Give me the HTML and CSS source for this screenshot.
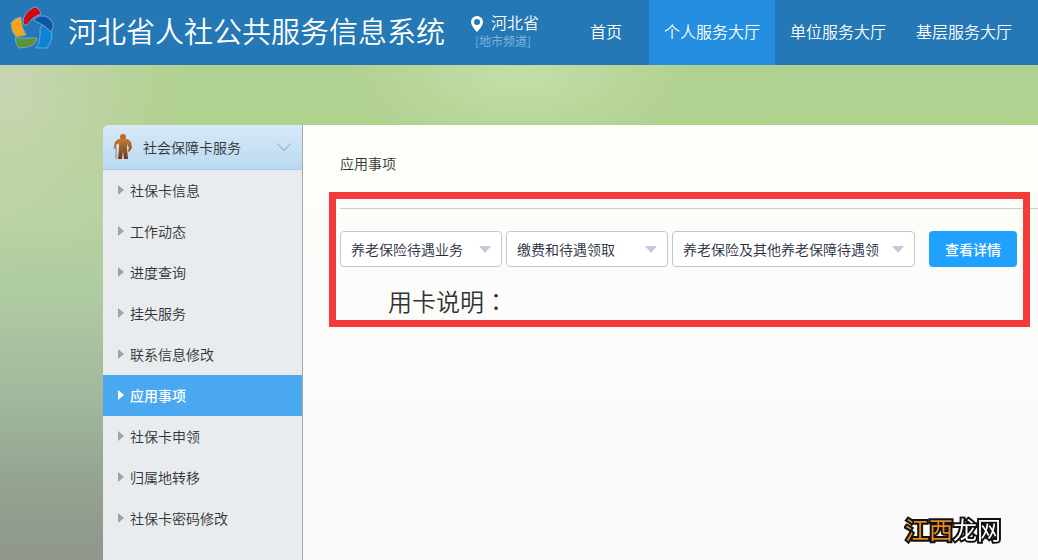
FILE: index.html
```html
<!DOCTYPE html>
<html lang="zh-CN">
<head>
<meta charset="utf-8">
<meta name="viewport" content="width=device-width, initial-scale=1">
<title>河北省人社公共服务信息系统</title>
<link rel="stylesheet" href="styles.css">
</head>
<body>
<header class="topbar">
  <svg class="logo" viewBox="0 4 46 48" aria-hidden="true">
    <g stroke="#6ea6d6" stroke-width="1" stroke-linejoin="round">
      <path fill="#0b84d6" d="M34 25 Q40 28 43 33 Q43 42 38 48 L27 48 Q32 42 31 28 Z"/>
      <path fill="#0c56a6" d="M24 20 L30 16 Q37 15 40 18 L44 23 Q45 28 42 32 Q36 25 24 20 Z"/>
      <path fill="#d2080f" d="M14 22 Q14 13 25 7 Q30 7 32 14 Q23 17 18 25 L15 25 Z"/>
      <path fill="#5a9434" d="M6 38 L28 38 Q27 48 10 48 Q7 46 6 38 Z"/>
      <path fill="#f7a416" d="M2 23 Q5 18 12 17 Q12 27 17 35 L7 37 Q2 31 2 23 Z"/>
    </g>
  </svg>
  <h1 class="site-title">河北省人社公共服务信息系统</h1>
  <div class="region">
    <div class="region-name">
      <svg class="pin" viewBox="0 0 12 16" aria-hidden="true">
        <path fill="#fff" fill-rule="evenodd" d="M6 0a6 6 0 0 0-6 6c0 4 6 10 6 10s6-6 6-10a6 6 0 0 0-6-6zm0 3a3 3 0 1 1 0 6 3 3 0 0 1 0-6z"/>
      </svg>
      <span>河北省</span>
    </div>
    <a class="region-link" href="#">[地市频道]</a>
  </div>
  <nav class="nav">
    <a class="nav-item nav-home" href="#">首页</a>
    <a class="nav-item active" href="#">个人服务大厅</a>
    <a class="nav-item" href="#">单位服务大厅</a>
    <a class="nav-item" href="#">基层服务大厅</a>
  </nav>
</header>

<div class="page">
  <aside class="sidebar">
    <button class="side-head" type="button">
      <svg class="person" viewBox="0 0 20 26" aria-hidden="true">
        <defs>
          <linearGradient id="coat" x1="0" y1="0" x2="0" y2="1">
            <stop offset="0" stop-color="#c87932"/>
            <stop offset="1" stop-color="#70371b"/>
          </linearGradient>
        </defs>
        <circle cx="10" cy="3" r="3" fill="#b9692b"/>
        <path fill="url(#coat)" d="M5 5h10l3 3 1 6-3 4-1-1 1-3-2-4v4l1 11h-4l-1-8-1 8H5l1-11v-5l-3 2v3l-2-1 1-5z"/>
        <path d="M0 14h4M3 14v11" stroke="#9a7f70" stroke-width="1" fill="none"/>
      </svg>
      <span class="side-title">社会保障卡服务</span>
      <svg class="chevron" viewBox="0 0 14 8" aria-hidden="true">
        <path d="M0 0.5L7 7.5L14 0.5" fill="none" stroke="#7d96ac" stroke-width="1"/>
      </svg>
    </button>
    <ul class="menu">
      <li><a class="menu-item" href="#">社保卡信息</a></li>
      <li><a class="menu-item" href="#">工作动态</a></li>
      <li><a class="menu-item" href="#">进度查询</a></li>
      <li><a class="menu-item" href="#">挂失服务</a></li>
      <li><a class="menu-item" href="#">联系信息修改</a></li>
      <li><a class="menu-item current" href="#">应用事项</a></li>
      <li><a class="menu-item" href="#">社保卡申领</a></li>
      <li><a class="menu-item" href="#">归属地转移</a></li>
      <li><a class="menu-item" href="#">社保卡密码修改</a></li>
    </ul>
  </aside>

  <main class="content">
    <h2 class="content-title">应用事项</h2>
    <section class="query">
      <form class="filters">
        <div class="picker">
          <select aria-label="业务类别"><option>养老保险待遇业务</option></select>
        </div>
        <div class="picker">
          <select aria-label="业务事项"><option>缴费和待遇领取</option></select>
        </div>
        <div class="picker picker-wide">
          <select aria-label="具体事项"><option>养老保险及其他养老保障待遇领</option></select>
        </div>
        <button class="detail-btn" type="button">查看详情</button>
      </form>
      <h3 class="note">用卡说明<span class="colon" lang="zh-TW">：</span></h3>
      <div class="highlight"></div>
    </section>
  </main>
</div>

<div class="watermark"><span class="watermark-accent">江西</span>龙网</div>
</body>
</html>
```

FILE: styles.css
```css
* {
  box-sizing: border-box;
}

body {
  margin: 0;
  min-height: 100vh;
  display: flex;
  flex-direction: column;
  font-family: "Noto Sans CJK SC", sans-serif;
  font-size: 14px;
  font-weight: 350;
  color: #333;
  background:
    radial-gradient(ellipse 170px 80px at 520px 75px, #c4dea9, transparent),
    radial-gradient(ellipse 180px 180px at 0 90px, #c9d5b4, transparent),
    linear-gradient(to bottom, #b1d193 0, #b1d18f 130px, #b5d2a0 220px, #aecaa2 300px, #a0b89c 400px, #939f8f 500px, #8f978c 560px);
}

a {
  color: inherit;
  text-decoration: none;
}

h1,
h2,
h3 {
  margin: 0;
  font-weight: 350;
}

.topbar {
  display: flex;
  height: 65px;
  align-items: center;
  padding-left: 9px;
  background: #2478b5;
  color: #fff;
  white-space: nowrap;
}

.logo {
  flex: none;
  width: 46px;
  height: 48px;
  margin-bottom: 9px;
}

.site-title {
  margin: 0 0 6px 13px;
  font-size: 29px;
  line-height: 40px;
}

.region {
  display: flex;
  flex-direction: column;
  margin: 0 0 3px 26px;
}

.region-name {
  display: flex;
  gap: 8px;
  font-size: 16px;
  line-height: 20px;
}

.pin {
  width: 12px;
  height: 16px;
  margin-top: 4px;
}

.region-link {
  padding-left: 4px;
  font-size: 12px;
  line-height: 18px;
  color: #84b8e2;
}

.nav {
  display: flex;
  align-self: stretch;
  margin-left: 36px;
}

.nav-item {
  padding: 0 15px;
  font-size: 16px;
  line-height: 63px;
}

.nav-home {
  margin-right: 12px;
}

.nav-item.active {
  background: #248fe0;
}

.page {
  flex: 1;
  display: flex;
  margin: 60px 0 0 103px;
}

.sidebar {
  flex: 0 0 200px;
  border-right: 1px solid #a5a9ac;
  border-top-left-radius: 6px;
  background: #e8ecef;
  overflow: hidden;
}

.side-head {
  display: flex;
  align-items: center;
  width: 100%;
  height: 45px;
  padding: 0 11px 0 10px;
  border: 0;
  border-bottom: 1px solid #b6c9d9;
  background: linear-gradient(#d8eaf9, #b9d9f1);
  font: inherit;
  color: #333;
}

.person {
  width: 20px;
  height: 26px;
}

.side-title {
  margin-left: 10px;
}

.chevron {
  width: 14px;
  height: 8px;
  margin-left: auto;
}

.menu {
  margin: 0;
  padding: 0;
  list-style: none;
}

.menu-item {
  display: flex;
  align-items: center;
  gap: 6px;
  height: 41px;
  padding: 0 0 2px 15px;
}

.menu-item::before {
  content: "";
  border: solid transparent;
  border-width: 5px 0 5px 6px;
  border-left-color: #a0a3a6;
}

.menu-item.current {
  background: #49a8f0;
  color: #fff;
  font-weight: 500;
}

.menu-item.current::before {
  border-left-color: #fff;
}

.content {
  flex: 1;
  min-width: 0;
  padding: 27px 0 0 37px;
  background: linear-gradient(#fcfff9, #fafafa 300px);
}

.content-title {
  padding-bottom: 34px;
  font-size: 14px;
  line-height: 22px;
}

.query {
  position: relative;
  border-top: 1px solid #ccc;
  padding-top: 22px;
}

.filters {
  display: flex;
  align-items: center;
  gap: 4px;
}

.picker {
  position: relative;
  width: 162px;
}

.picker-wide {
  width: 243px;
}

.picker::after {
  content: "";
  position: absolute;
  top: 15px;
  right: 11px;
  border: solid transparent;
  border-width: 7px 6px 0;
  border-top-color: #bfcbd9;
  pointer-events: none;
}

.picker select {
  display: block;
  width: 100%;
  height: 36px;
  padding: 0 24px 0 10px;
  appearance: none;
  border: 1px solid #bfc9d6;
  border-radius: 4px;
  background: #fff;
  font: inherit;
  color: #1f2d3d;
}

.detail-btn {
  width: 88px;
  height: 36px;
  margin-left: 10px;
  padding: 0;
  border: 0;
  border-radius: 4px;
  background: #20a0ff;
  font: inherit;
  font-weight: 500;
  color: #fff;
}

.note {
  padding-left: 48px;
  margin-top: 16px;
  font-size: 24px;
  line-height: 36px;
}

.colon {
  font-family: "Noto Sans CJK TC", sans-serif;
}

/* Marker frame laid over the query area */
.highlight {
  position: absolute;
  inset: -17px 8px -8px -11px;
  border: 7px solid #f53a3a;
  pointer-events: none;
}

.watermark {
  position: fixed;
  right: 37px;
  bottom: 13px;
  font-size: 24px;
  font-weight: 400;
  line-height: 36px;
  color: #fff;
  -webkit-text-stroke: 4px #111;
  paint-order: stroke fill;
}

.watermark-accent {
  color: #e88a1a;
}
```
